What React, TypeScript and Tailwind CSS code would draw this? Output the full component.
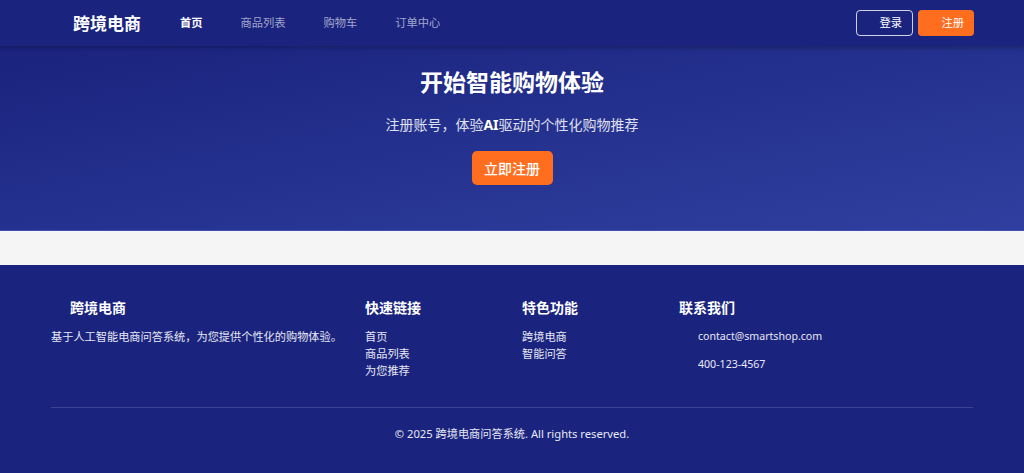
const font = { fontFamily: '"Noto Sans", "Noto Sans CJK SC", sans-serif' };

const navItems = ["首页", "商品列表", "购物车", "订单中心"];

const Header = () => (
  <header className="h-[46px] bg-[#1a237e] shadow-[0_2px_4px_rgba(0,0,0,0.25)] relative z-10 flex items-center pl-[73px] pr-[50px]">
    <div className="text-white font-bold text-[17px] leading-none">跨境电商</div>
    <nav className="flex items-center gap-[38px] ml-[39px]">
      {navItems.map((item, i) => (
        <a key={item} className={`text-[11.25px] leading-none ${i === 0 ? "text-white font-bold" : "text-white/60"}`}>
          {item}
        </a>
      ))}
    </nav>
    <div className="ml-auto flex items-center gap-[5px]">
      <button className="h-[26px] w-[57px] rounded-[4px] border border-white/80 text-white text-[11.25px] flex items-center justify-end pr-[10px]">
        登录
      </button>
      <button className="h-[26px] w-[56px] rounded-[4px] bg-[#ff6d1f] text-white text-[11.25px] flex items-center justify-end pr-[10px]">
        注册
      </button>
    </div>
  </header>
);

const Hero = () => (
  <section className="h-[185px] bg-linear-to-br from-[#1a237e] to-[#303f9f] border-b border-[#3f51b5] flex flex-col items-center pt-[22px]">
    <h1 className="text-white font-bold text-[23px] leading-[28px]">开始智能购物体验</h1>
    <p className="text-white/85 text-[14px] leading-[20px] mt-[19px]">
      注册账号，体验<span className="font-bold text-white">AI</span>驱动的个性化购物推荐
    </p>
    <button className="mt-[16px] h-[34px] w-[81px] rounded-[5px] bg-[#ff6d1f] text-white text-[14px] font-medium">
      立即注册
    </button>
  </section>
);

const Footer = () => (
  <footer className="bg-[#1a237e] px-[51px] pt-[34px] pb-[30px]">
    <div className="grid grid-cols-6 gap-x-5">
      <div className="col-span-2">
        <h3 className="text-white font-bold text-[14px] leading-[18px] pl-[19px]">跨境电商</h3>
        <p className="text-white/90 text-[11.2px] leading-[17px] mt-[11px]">
          基于人工智能电商问答系统，为您提供个性化的购物体验。
        </p>
      </div>
      <div>
        <h3 className="text-white font-bold text-[14px] leading-[18px]">快速链接</h3>
        <ul className="mt-[11px] text-white/90 text-[11.2px] leading-[17px]">
          <li>首页</li>
          <li>商品列表</li>
          <li>为您推荐</li>
        </ul>
      </div>
      <div>
        <h3 className="text-white font-bold text-[14px] leading-[18px]">特色功能</h3>
        <ul className="mt-[11px] text-white/90 text-[11.2px] leading-[17px]">
          <li>跨境电商</li>
          <li>智能问答</li>
        </ul>
      </div>
      <div className="col-span-2">
        <h3 className="text-white font-bold text-[14px] leading-[18px]">联系我们</h3>
        <ul className="mt-[11px] text-white/90 text-[11.2px] leading-[17px] pl-[19px] flex flex-col gap-[11px]">
          <li className="text-[10.6px]">contact@smartshop.com</li>
          <li className="text-[10.6px]">400-123-4567</li>
        </ul>
      </div>
    </div>
    <div className="border-t border-white/15 mt-[28px] pt-[17px] text-center text-white/90 text-[11.2px] leading-[17px]">
      © 2025 跨境电商问答系统. All rights reserved.
    </div>
  </footer>
);

export default function App() {
  return (
    <div style={font} className="min-h-[473px] bg-[#1a237e]">
      <Header />
      <Hero />
      <div className="h-[34px] bg-[#f5f5f5]" />
      <Footer />
    </div>
  );
}
